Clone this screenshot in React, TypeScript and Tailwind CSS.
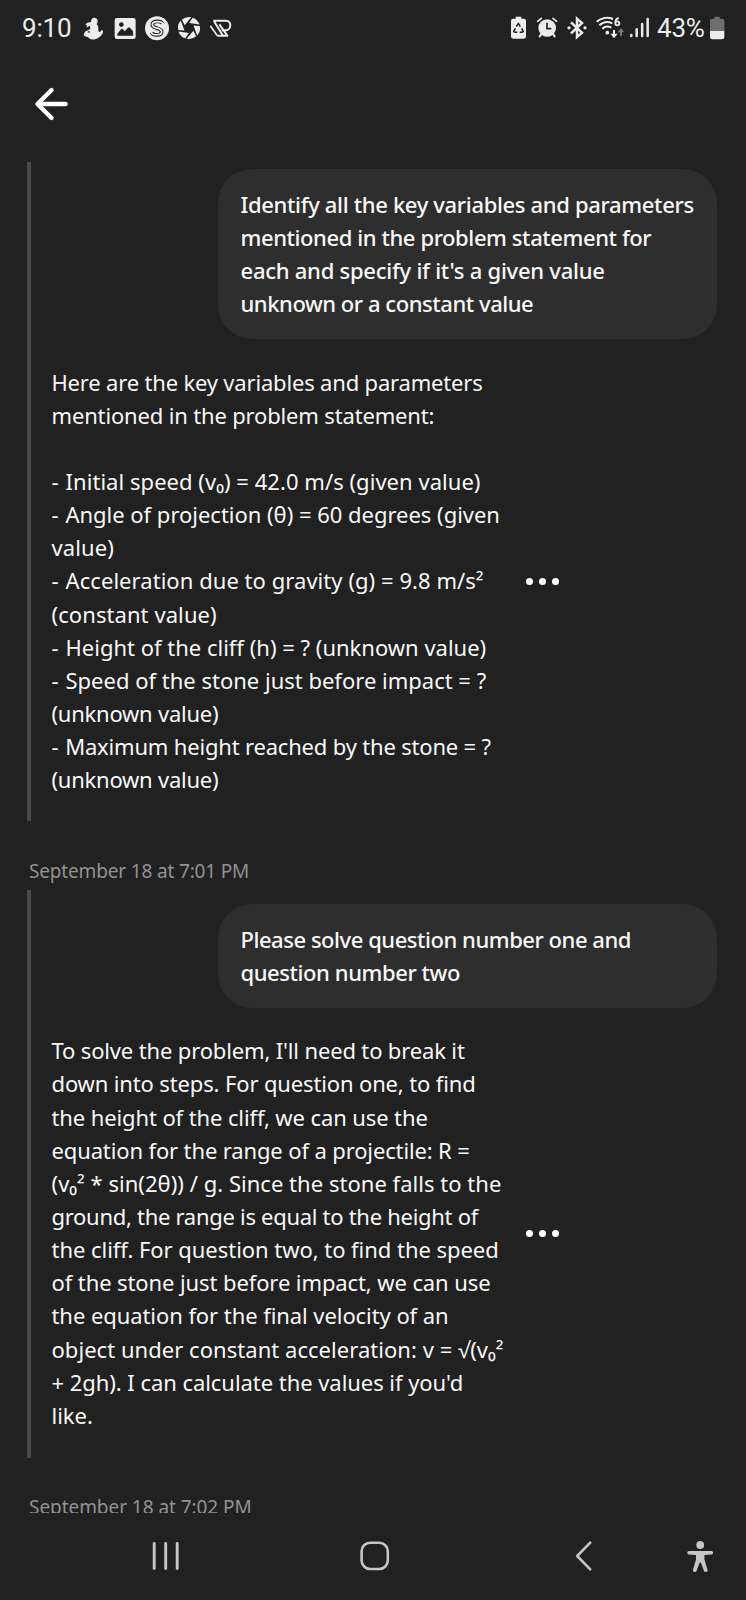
import React from "react";

type Line = { text: string; tracking?: string };

const identifyPrompt: Line[] = [
  { text: "Identify all the key variables and parameters", tracking: "tracking-[-0.34px]" },
  { text: "mentioned in the problem statement for", tracking: "tracking-[-0.41px]" },
  { text: "each and specify if it's a given value", tracking: "tracking-[-0.25px]" },
  { text: "unknown or a constant value", tracking: "tracking-[-0.45px]" },
];

const identifyAnswer: Line[] = [
  { text: "Here are the key variables and parameters", tracking: "tracking-[-0.18px]" },
  { text: "mentioned in the problem statement:", tracking: "tracking-[-0.16px]" },
  { text: "" },
  { text: "- Initial speed (v₀) = 42.0 m/s (given value)", tracking: "tracking-[0.04px]" },
  { text: "- Angle of projection (θ) = 60 degrees (given", tracking: "tracking-[-0.02px]" },
  { text: "value)", tracking: "tracking-[0.1px]" },
  { text: "- Acceleration due to gravity (g) = 9.8 m/s²", tracking: "tracking-[0.05px]" },
  { text: "(constant value)", tracking: "tracking-[0.08px]" },
  { text: "- Height of the cliff (h) = ? (unknown value)", tracking: "tracking-[0px]" },
  { text: "- Speed of the stone just before impact = ?", tracking: "tracking-[0px]" },
  { text: "(unknown value)", tracking: "tracking-[-0.24px]" },
  { text: "- Maximum height reached by the stone = ?", tracking: "tracking-[-0.18px]" },
  { text: "(unknown value)", tracking: "tracking-[-0.24px]" },
];

const solvePrompt: Line[] = [
  { text: "Please solve question number one and", tracking: "tracking-[-0.46px]" },
  { text: "question number two", tracking: "tracking-[-0.42px]" },
];

const solveAnswer: Line[] = [
  { text: "To solve the problem, I'll need to break it", tracking: "tracking-[-0.15px]" },
  { text: "down into steps. For question one, to find", tracking: "tracking-[-0.14px]" },
  { text: "the height of the cliff, we can use the", tracking: "tracking-[-0.11px]" },
  { text: "equation for the range of a projectile: R =", tracking: "tracking-[-0.13px]" },
  { text: "(v₀² * sin(2θ)) / g. Since the stone falls to the", tracking: "tracking-[0.03px]" },
  { text: "ground, the range is equal to the height of", tracking: "tracking-[-0.29px]" },
  { text: "the cliff. For question two, to find the speed", tracking: "tracking-[-0.04px]" },
  { text: "of the stone just before impact, we can use", tracking: "tracking-[-0.1px]" },
  { text: "the equation for the final velocity of an", tracking: "tracking-[-0.07px]" },
  { text: "object under constant acceleration: v = √(v₀²", tracking: "tracking-[0.04px]" },
  { text: "+ 2gh). I can calculate the values if you'd", tracking: "tracking-[-0.05px]" },
  { text: "like.", tracking: "tracking-[0px]" },
];

function Lines({ lines }: { lines: Line[] }) {
  return (
    <>
      {lines.map((line, i) => (
        <span key={i} className={`block h-[33.17px] whitespace-nowrap ${line.tracking ?? ""}`}>
          {line.text.startsWith("- ") ? (
            <>
              <span className="mr-[1.200px]">-</span>
              {line.text.slice(1)}
            </>
          ) : (
            line.text
          )}
        </span>
      ))}
    </>
  );
}

function StatusBar() {
  return (
    <header className="flex h-14 shrink-0 items-center text-[#ececec]">
      <span className="ml-[22px] w-[55px] font-['Roboto',sans-serif] text-[26px] leading-8 tracking-[-0.2px]">9:10</span>
      {/* seated figure */}
      <svg className="size-8" viewBox="231 36 96 96" fill="currentColor">
        <path d="M283 53c6 0 10 4 10 10 0 4-2 7-3 10 5 5 6 11 5 19 3 6 7 5 9-2l5 2c1 8-4 14-12 20-7 8-24 9-31 1-5-3-12-3-15-8 2-9 7-13 13-14l7-5-1-8-11 4 2-7-5-1c3-6 11-7 17-8 0-8 4-13 10-13z" />
        <path d="M262 96l6-4 2 7z" fill="#212121" />
      </svg>
      {/* picture */}
      <svg className="size-8" viewBox="327 36 96 96" fill="currentColor">
        <path fillRule="evenodd" d="M351 54h49q7 0 7 7v49q0 7-7 7h-49q-7 0-7-7V61q0-7 7-7zm1 53h48l-1-13-9-11c-2-2-4-2-6 0l-10 11-5-6c-2-2-4-2-6 0l-11 13zM364 67a7 7 0 1 0 .1 0z" />
      </svg>
      {/* letter S badge */}
      <svg className="size-8" viewBox="423 36 96 96" fill="none">
        <circle cx="471" cy="85" r="36" fill="currentColor" />
        <path d="M487 71c-4-10-30-9-30 3 0 13 28 8 28 21 0 13-27 13-30 2" stroke="#212121" strokeWidth="11" />
        <path d="M489 73c-4-12-32-10-32 1 0 13 28 8 28 21 0 12-28 13-32 0" stroke="currentColor" strokeWidth="5" />
      </svg>
      {/* camera shutter */}
      <svg className="size-8" viewBox="519 36 96 96" fill="currentColor">
        {[0, 60, 120, 180, 240, 300].map((a) => (
          <path key={a} transform={`rotate(${a} 567 84)`} d="M574 51.500A33 33 0 0 0 545.500 59L554 76z" />
        ))}
      </svg>
      {/* striped P mark */}
      <svg className="size-8" viewBox="615 36 96 96" fill="none" stroke="currentColor">
        <path d="M640 62h38c18 0 17 29-2 29h-11M642 64l27 43h13l-24-34M652 107h20" strokeWidth="6" strokeLinejoin="round" />
        <path d="M631 77l21 30" strokeWidth="5" />
      </svg>

      {/* recycling battery */}
      <svg className="ml-auto h-8 w-[25px]" viewBox="30 36 75 96" fill="none">
        <path d="M59 50h17v6h7q7 0 7 7v45q0 8-8 8H53q-8 0-8-8V63q0-7 7-7h7z" fill="currentColor" />
        <path d="M61 80l6-10 6 10M77 85l5 10-6 2h-5M64 97h-6l-5-2 5-10" stroke="#212121" strokeWidth="4.500" strokeLinejoin="round" />
      </svg>
      {/* alarm clock */}
      <svg className="h-8 w-8" viewBox="105 36 96 96" fill="none" stroke="currentColor" strokeLinecap="round">
        <circle cx="153.500" cy="84" r="26.500" fill="currentColor" stroke="none" />
        <path d="M125 64l11-9M171 55l11 9" strokeWidth="5" />
        <path d="M137 101l-6 8M170 101l6 8" strokeWidth="6" />
        <path d="M153 70v16h11" stroke="#212121" strokeWidth="5" />
      </svg>
      {/* bluetooth */}
      <svg className="h-8 w-7" viewBox="201 36 84 96" fill="none" stroke="currentColor" strokeWidth="7.500">
        <path d="M225 67l33 31-15 13V56l15 13-33 31" />
        <circle cx="219" cy="83.500" r="5" fill="currentColor" stroke="none" />
        <circle cx="267" cy="83.500" r="5" fill="currentColor" stroke="none" />
      </svg>
      {/* wifi 6 */}
      <svg className="ml-[2px] h-8 w-[35px]" viewBox="291 36 105 96" fill="none" stroke="currentColor" strokeWidth="6">
        <path d="M302 65c13-12 33-15 49-8M310 76c11-10 26-12 39-6M319 86c8-7 18-8 27-3" />
        <circle cx="334" cy="98" r="5.500" fill="currentColor" stroke="none" />
        <path d="M368 54c-8 2-10 7-10 14" strokeWidth="5.500" />
        <circle cx="364" cy="70" r="6" strokeWidth="5.500" />
        <path d="M354 90v15" strokeWidth="6" />
        <path d="M343 101h22l-11 14z" fill="currentColor" stroke="none" />
        <path d="M375 108V94" stroke="#777777" strokeWidth="6" />
        <path d="M365 97h20l-10-13z" fill="#777777" stroke="none" />
      </svg>
      {/* signal */}
      <svg className="h-8 w-6" viewBox="396 36 72 96" fill="none" stroke="currentColor" strokeWidth="7.500" strokeLinecap="round">
        <path d="M406 105v3M422 88v20M438.500 72v36M455 57v51" />
      </svg>
      <span className="ml-[5px] w-[51px] font-['Roboto',sans-serif] text-[26px] leading-8 tracking-[-0.2px]">43%</span>
      {/* battery level */}
      <svg className="mr-[18px] h-8 w-5" viewBox="636 36 60 96" fill="none">
        <path d="M655 50h16v6h7q7 0 7 7v30h-43V63q0-7 7-7h6z" fill="#6e6e6e" />
        <path d="M642 93h43v18q0 7-7 7h-29q-7 0-7-7z" fill="currentColor" />
      </svg>
    </header>
  );
}

function Bubble({ lines }: { lines: Line[] }) {
  return (
    <div className="mr-[29px] ml-auto w-[499px] rounded-[34px] bg-[#2e2e2e] py-[18.7px] pl-[22.5px] font-medium">
      <Lines lines={lines} />
    </div>
  );
}

function Answer({ lines }: { lines: Line[] }) {
  return (
    <div className="mt-[26.5px] ml-[20.5px] flex items-center">
      <div className="w-[474px]">
        <Lines lines={lines} />
      </div>
      <button aria-label="More" className="flex gap-[6px]">
        <span className="size-[7px] rounded-full bg-white" />
        <span className="size-[7px] rounded-full bg-white" />
        <span className="size-[7px] rounded-full bg-white" />
      </button>
    </div>
  );
}

export default function App() {
  return (
    <div className="flex h-[1600px] w-[746px] flex-col overflow-hidden bg-[#212121] font-['Noto_Sans','Open_Sans',sans-serif] text-[22px] leading-[33.17px] text-[#f8f8f8]">
      <StatusBar />
      <div className="h-[106px] shrink-0 pt-[30px] pl-[33px]">
        <svg className="size-9" viewBox="0 0 36 36" fill="none" stroke="#fff" strokeWidth="4.400" strokeLinecap="round" strokeLinejoin="round">
          <path d="M18.500 4 4.500 18l14 14M5 18h27.500" />
        </svg>
      </div>

      <main className="h-[1351px] shrink-0 overflow-hidden">
        <section className="ml-[27px] h-[659px] border-l-4 border-[#4a4a4a] pt-[7px]">
          <Bubble lines={identifyPrompt} />
          <Answer lines={identifyAnswer} />
        </section>
        <time className="mt-[37px] ml-[29px] block h-[32px] text-[19px] leading-[26px] tracking-[-0.16px] text-[#929292]">September 18 at 7:01 PM</time>
        <section className="ml-[27px] h-[568px] border-l-4 border-[#4a4a4a] pt-[14px]">
          <Bubble lines={solvePrompt} />
          <Answer lines={solveAnswer} />
        </section>
        <time className="mt-[36px] ml-[29px] block h-[31px] text-[19px] leading-[26px] tracking-[-0.05px] text-[#929292]">September 18 at 7:02 PM</time>
      </main>

      <nav className="flex h-[85px] shrink-0 items-center text-[#c6c6c6]">
        <svg className="ml-[150px] h-8 w-8" viewBox="0 0 32 32" fill="none" stroke="currentColor" strokeWidth="2.900" strokeLinecap="round">
          <path d="M4.200 3.500v25M15.700 3.500v25M27.200 3.500v25" />
        </svg>
        <svg className="ml-[177px] h-8 w-8" viewBox="0 0 32 32" fill="none" stroke="currentColor" strokeWidth="2.600">
          <rect x="2.600" y="2.800" width="26.200" height="26.200" rx="8.500" />
        </svg>
        <svg className="ml-[177px] h-8 w-8" viewBox="0 0 32 32" fill="none" stroke="currentColor" strokeWidth="2.600" strokeLinecap="round" strokeLinejoin="round">
          <path d="M22.200 2.700 9.200 16l13 13.300" />
        </svg>
        <svg className="ml-[84px] h-8 w-8" viewBox="0 0 32 32" fill="currentColor">
          <circle cx="16.200" cy="5" r="3.900" />
          <path d="M5 10.900h22.400a1.700 1.700 0 0 1 0 3.500L20.400 15v4.400l3.100 10.400c.6 2.300-2.700 3-3.500 1.200L16.800 22.500h-1.100L12.500 31c-.9 1.800-4.100 1.100-3.500-1.200L12 19.400V15l-7-.6a1.700 1.700 0 0 1 0-3.500z" />
        </svg>
      </nav>
    </div>
  );
}
